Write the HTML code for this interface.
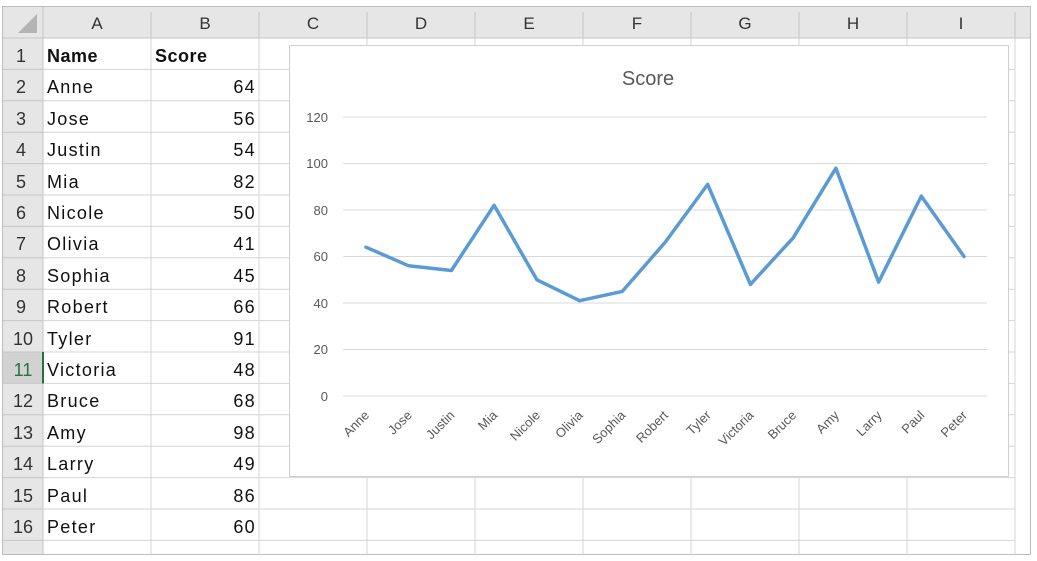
<!DOCTYPE html>
<html><head><meta charset="utf-8"><style>
html,body{margin:0;padding:0;background:#fff;width:1037px;height:561px;overflow:hidden}
svg{display:block}
.c{font-family:"Liberation Sans",sans-serif;font-size:18px;fill:#111;letter-spacing:1.3px}
.h{font-family:"Liberation Sans",sans-serif;font-size:17px;fill:#333;text-anchor:middle}
.ax{font-family:"Liberation Sans",sans-serif;font-size:13px;fill:#595959}
</style></head><body>
<svg width="1037" height="561" xmlns="http://www.w3.org/2000/svg">
<rect x="0" y="0" width="1037" height="561" fill="#fff"/>
<!-- header backgrounds -->
<rect x="3" y="7" width="1027" height="31" fill="#e6e6e6"/>
<rect x="3" y="38" width="40" height="516" fill="#e6e6e6"/>
<rect x="3" y="352" width="40" height="31.4" fill="#d2d2d2"/>
<polygon points="37,14 37,33 18,33" fill="#b4b4b4"/>
<!-- grid lines -->
<g stroke="#d4d4d4" stroke-width="1">
<line x1="43" y1="69.4" x2="1015" y2="69.4"/><line x1="43" y1="100.8" x2="1015" y2="100.8"/>
<line x1="43" y1="132.2" x2="1015" y2="132.2"/><line x1="43" y1="163.6" x2="1015" y2="163.6"/>
<line x1="43" y1="195" x2="1015" y2="195"/><line x1="43" y1="226.4" x2="1015" y2="226.4"/>
<line x1="43" y1="257.8" x2="1015" y2="257.8"/><line x1="43" y1="289.2" x2="1015" y2="289.2"/>
<line x1="43" y1="320.6" x2="1015" y2="320.6"/><line x1="43" y1="352" x2="1015" y2="352"/>
<line x1="43" y1="383.4" x2="1015" y2="383.4"/><line x1="43" y1="414.8" x2="1015" y2="414.8"/>
<line x1="43" y1="446.2" x2="1015" y2="446.2"/><line x1="43" y1="477.6" x2="1015" y2="477.6"/>
<line x1="43" y1="509" x2="1015" y2="509"/><line x1="43" y1="540.4" x2="1015" y2="540.4"/>
<line x1="151" y1="38" x2="151" y2="554"/><line x1="259" y1="38" x2="259" y2="554"/>
<line x1="367" y1="38" x2="367" y2="554"/><line x1="475" y1="38" x2="475" y2="554"/>
<line x1="583" y1="38" x2="583" y2="554"/><line x1="691" y1="38" x2="691" y2="554"/>
<line x1="799" y1="38" x2="799" y2="554"/><line x1="907" y1="38" x2="907" y2="554"/>
<line x1="1015" y1="38" x2="1015" y2="554"/>
</g>
<g stroke="#c6c6c6" stroke-width="1">
<line x1="3" y1="38" x2="1030" y2="38"/><line x1="43" y1="7" x2="43" y2="554"/>
<line x1="151" y1="12" x2="151" y2="38"/><line x1="259" y1="12" x2="259" y2="38"/><line x1="367" y1="12" x2="367" y2="38"/>
<line x1="475" y1="12" x2="475" y2="38"/><line x1="583" y1="12" x2="583" y2="38"/><line x1="691" y1="12" x2="691" y2="38"/>
<line x1="799" y1="12" x2="799" y2="38"/><line x1="907" y1="12" x2="907" y2="38"/><line x1="1015" y1="12" x2="1015" y2="38"/>
<line x1="3" y1="69.4" x2="43" y2="69.4"/><line x1="3" y1="100.8" x2="43" y2="100.8"/><line x1="3" y1="132.2" x2="43" y2="132.2"/>
<line x1="3" y1="163.6" x2="43" y2="163.6"/><line x1="3" y1="195" x2="43" y2="195"/><line x1="3" y1="226.4" x2="43" y2="226.4"/>
<line x1="3" y1="257.8" x2="43" y2="257.8"/><line x1="3" y1="289.2" x2="43" y2="289.2"/><line x1="3" y1="320.6" x2="43" y2="320.6"/>
<line x1="3" y1="352" x2="43" y2="352"/><line x1="3" y1="383.4" x2="43" y2="383.4"/><line x1="3" y1="414.8" x2="43" y2="414.8"/>
<line x1="3" y1="446.2" x2="43" y2="446.2"/><line x1="3" y1="477.6" x2="43" y2="477.6"/><line x1="3" y1="509" x2="43" y2="509"/>
<line x1="3" y1="540.4" x2="43" y2="540.4"/>
</g>
<rect x="2.5" y="6.5" width="1028" height="548" fill="none" stroke="#bdbdbd"/>
<line x1="43" y1="352" x2="43" y2="383.4" stroke="#217346" stroke-width="2"/>
<!-- column headers -->
<g class="h"><text x="97" y="29">A</text><text x="205" y="29">B</text><text x="313" y="29">C</text><text x="421" y="29">D</text><text x="529" y="29">E</text><text x="637" y="29">F</text><text x="745" y="29">G</text><text x="853" y="29">H</text><text x="961" y="29">I</text></g>
<!-- row headers -->
<g class="h" style="font-size:18px">
<text x="21" y="62">1</text><text x="21" y="93">2</text><text x="21" y="125">3</text><text x="21" y="156">4</text>
<text x="21" y="188">5</text><text x="21" y="219">6</text><text x="21" y="250">7</text><text x="21" y="282">8</text>
<text x="21" y="313">9</text><text x="23" y="345">10</text><text x="23" y="376" fill="#217346">11</text><text x="23" y="407">12</text>
<text x="23" y="439">13</text><text x="23" y="470">14</text><text x="23" y="502">15</text><text x="23" y="533">16</text>
</g>
<!-- cells -->
<g class="c">
<text x="47" y="62" font-weight="bold" letter-spacing="0.5">Name</text><text x="155" y="62" font-weight="bold" letter-spacing="0.5">Score</text>
<text x="47" y="93">Anne</text><text x="47" y="125">Jose</text><text x="47" y="156">Justin</text><text x="47" y="188">Mia</text>
<text x="47" y="219">Nicole</text><text x="47" y="250">Olivia</text><text x="47" y="282">Sophia</text><text x="47" y="313">Robert</text>
<text x="47" y="345">Tyler</text><text x="47" y="376">Victoria</text><text x="47" y="407">Bruce</text><text x="47" y="439">Amy</text>
<text x="47" y="470">Larry</text><text x="47" y="502">Paul</text><text x="47" y="533">Peter</text>
</g>
<g class="c" text-anchor="end" letter-spacing="0.5">
<text x="256" y="93">64</text><text x="256" y="125">56</text><text x="256" y="156">54</text><text x="256" y="188">82</text>
<text x="256" y="219">50</text><text x="256" y="250">41</text><text x="256" y="282">45</text><text x="256" y="313">66</text>
<text x="256" y="345">91</text><text x="256" y="376">48</text><text x="256" y="407">68</text><text x="256" y="439">98</text>
<text x="256" y="470">49</text><text x="256" y="502">86</text><text x="256" y="533">60</text>
</g>
<!-- chart -->
<rect x="289.5" y="45.5" width="719" height="431" fill="#fff" stroke="#d0d0d0"/>
<text x="648" y="85" font-family="Liberation Sans,sans-serif" font-size="20" fill="#595959" text-anchor="middle">Score</text>
<g stroke="#d9d9d9" stroke-width="1">
<line x1="343" y1="117" x2="987" y2="117"/><line x1="343" y1="163.5" x2="987" y2="163.5"/>
<line x1="343" y1="210" x2="987" y2="210"/><line x1="343" y1="256.5" x2="987" y2="256.5"/>
<line x1="343" y1="303" x2="987" y2="303"/><line x1="343" y1="349.5" x2="987" y2="349.5"/>
<line x1="343" y1="396" x2="987" y2="396"/>
</g>
<g class="ax" text-anchor="end">
<text x="328" y="122">120</text><text x="328" y="168">100</text><text x="328" y="215">80</text><text x="328" y="261">60</text>
<text x="328" y="308">40</text><text x="328" y="354">20</text><text x="328" y="401">0</text>
</g>
<polyline fill="none" stroke="#5b9bd5" stroke-width="3.5" stroke-linejoin="round" stroke-linecap="round"
points="366,247.2 408.7,265.8 451.4,270.5 494.1,205.3 536.9,279.8 579.6,300.7 622.3,291.4 665,242.5 707.7,184.4 750.4,284.4 793.1,237.9 835.9,168.2 878.6,282.1 921.3,196.1 964,256.5"/>
<g class="ax">
<text transform="translate(370,416) rotate(-45)" text-anchor="end">Anne</text>
<text transform="translate(412.7,416) rotate(-45)" text-anchor="end">Jose</text>
<text transform="translate(455.4,416) rotate(-45)" text-anchor="end">Justin</text>
<text transform="translate(498.1,416) rotate(-45)" text-anchor="end">Mia</text>
<text transform="translate(540.9,416) rotate(-45)" text-anchor="end">Nicole</text>
<text transform="translate(583.6,416) rotate(-45)" text-anchor="end">Olivia</text>
<text transform="translate(626.3,416) rotate(-45)" text-anchor="end">Sophia</text>
<text transform="translate(669,416) rotate(-45)" text-anchor="end">Robert</text>
<text transform="translate(711.7,416) rotate(-45)" text-anchor="end">Tyler</text>
<text transform="translate(754.4,416) rotate(-45)" text-anchor="end">Victoria</text>
<text transform="translate(797.1,416) rotate(-45)" text-anchor="end">Bruce</text>
<text transform="translate(839.9,416) rotate(-45)" text-anchor="end">Amy</text>
<text transform="translate(882.6,416) rotate(-45)" text-anchor="end">Larry</text>
<text transform="translate(925.3,416) rotate(-45)" text-anchor="end">Paul</text>
<text transform="translate(968,416) rotate(-45)" text-anchor="end">Peter</text>
</g>
</svg>
</body></html>
